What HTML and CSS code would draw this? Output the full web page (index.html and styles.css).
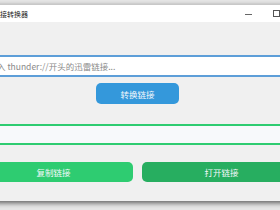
FILE: index.html
```html
<!DOCTYPE html>
<html lang="zh-CN">
<head>
    <meta charset="UTF-8">
    <title>链接转换器</title>
    <link rel="stylesheet" href="styles.css">
</head>
<body>
    <div class="window">
        <div class="titlebar">
            <span class="title">链接转换器</span>
            <div class="controls">
                <span class="ctrl"><span class="min"></span></span>
                <span class="ctrl"><span class="max"></span></span>
                <span class="ctrl"></span>
            </div>
        </div>

        <div class="content">
            <input type="text" id="source" class="link-input" placeholder="请输入 thunder://开头的迅雷链接...">
            <button class="btn btn-blue">转换链接</button>

            <input type="text" id="result" class="result-input" readonly>

            <div class="actions">
                <button class="btn btn-green">复制链接</button>
                <button class="btn btn-dark">打开链接</button>
            </div>
        </div>
    </div>
</body>
</html>
```

FILE: styles.css
```css
html, body {
    margin: 0;
    width: 280px;
    height: 210px;
    overflow: hidden;
}
body {
    background-color: #e6e6e6;
    font-family: "Noto Sans CJK SC", "Noto Sans", sans-serif;
}
.window {
    margin-top: 4px;
    margin-left: -36px;
    width: 354px;
    height: 196px;
    border-top: 1px solid #c8c8c8;
    background-color: #f0f0f0;
    box-shadow: 0 2px 5px rgba(0, 0, 0, 0.6);
}
.titlebar {
    display: flex;
    align-items: center;
    height: 17px;
    background-color: #fff;
}
.title {
    padding-left: 29px;
    font-size: 7px;
    color: #222;
}
.controls {
    display: flex;
    margin-left: auto;
    height: 100%;
}
.ctrl {
    display: flex;
    align-items: center;
    justify-content: center;
    width: 28px;
    height: 100%;
}
.min {
    width: 7px;
    height: 1px;
    margin-top: 1px;
    background-color: #666;
}
.max {
    width: 5px;
    height: 5px;
    border: 1px solid #555;
}
.content {
    display: flex;
    flex-direction: column;
    width: 327px;
    margin-left: 10px;
    padding-top: 33px;
}
.link-input, .result-input {
    box-sizing: border-box;
    width: 100%;
    height: 22px;
    margin: 0;
    padding: 0 4px;
    border: 2px solid #5d9ed8;
    background-color: #fff;
    font-family: "Noto Sans CJK SC", sans-serif;
    font-size: 8.5px;
    outline: none;
}
.link-input::placeholder {
    color: #8a8a8a;
}
.result-input {
    height: 21px;
    margin-top: 20px;
    border-color: #2ecc71;
    background-color: #f7f9fb;
}
.btn {
    height: 21px;
    border: none;
    border-radius: 5px;
    color: #f4f8fb;
    font-family: "Noto Sans CJK SC", sans-serif;
    font-size: 8.5px;
    padding: 0;
    cursor: pointer;
}
.btn-blue {
    align-self: center;
    width: 83px;
    margin-top: 6px;
    background-color: #3498db;
}
.actions {
    display: flex;
    gap: 9px;
    margin-top: 17px;
}
.actions .btn {
    flex: 1;
    height: 20px;
}
.btn-green {
    background-color: #2ecc71;
}
.btn-dark {
    background-color: #27ae60;
}
```
